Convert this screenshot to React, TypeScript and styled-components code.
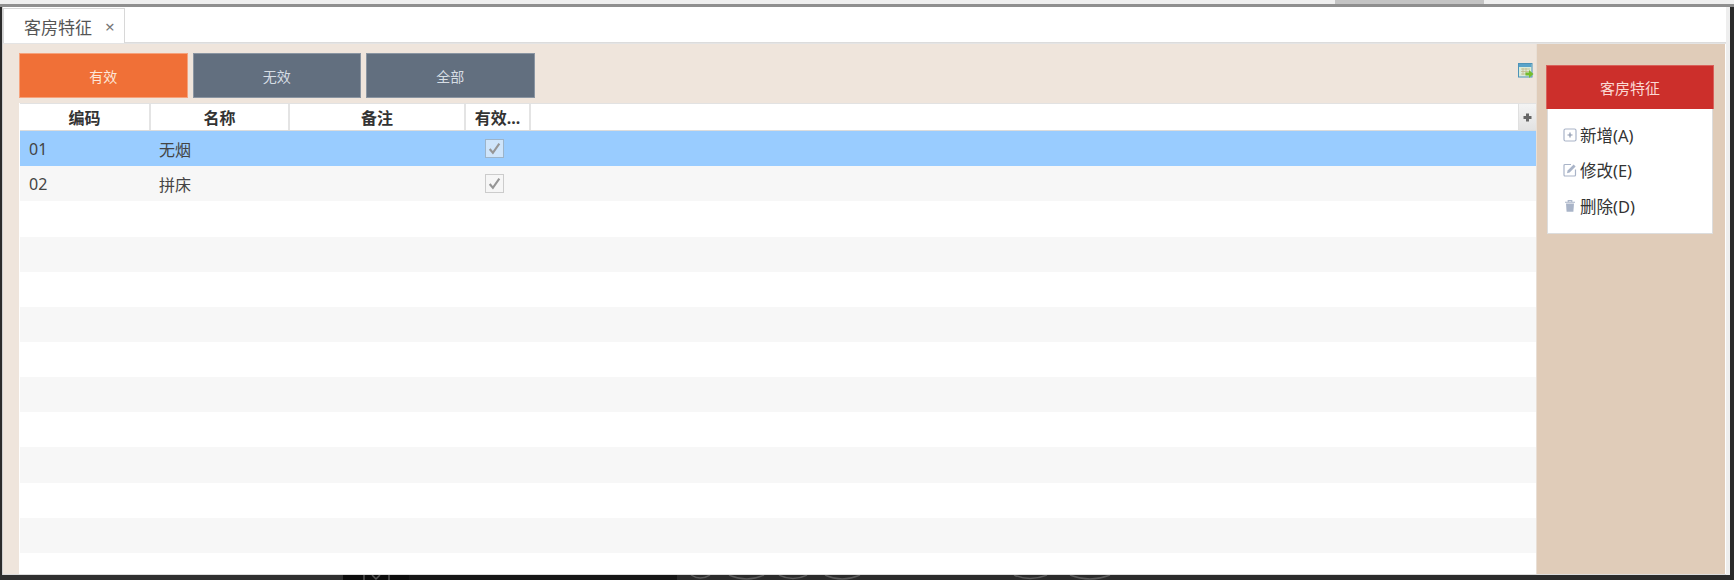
import * as React from 'react'
import styled, { createGlobalStyle } from 'styled-components'

const GlobalStyle = createGlobalStyle`
  html, body {
    margin: 0;
    padding: 0;
    height: 100%;
    background: #2b2b2b;
    overflow: hidden;
  }
`

const Page = styled.div`
  width: 1734px;
  height: 580px;
  display: flex;
  flex-direction: column;
  overflow: hidden;
  color: #333;
  font-family: 'Noto Sans', 'Noto Sans CJK SC', sans-serif;
`

const TopStrip = styled.div`
  height: 4px;
  display: flex;
  padding-left: 1335px;
  padding-right: 250px;
  background: #efefef;
  border-bottom: 3px solid #8f8f8f;
`

const TopBlock = styled.div`
  flex: 1;
  background: #c4c4c4;
`

const Frame = styled.div`
  flex: 1;
  min-height: 0;
  display: flex;
  flex-direction: column;
  margin: 0 4px 0 2px;
  border-left: 1px solid #d0d0d0;
  border-right: 4px solid #eeeeee;
  background: #fff;
`

const TabBar = styled.div`
  height: 35px;
  display: flex;
  align-items: flex-end;
  border-bottom: 1px solid #dcdcdc;
`

const Tab = styled.div`
  width: 122px;
  height: 35px;
  box-sizing: border-box;
  margin-bottom: -1px;
  padding-left: 20px;
  display: flex;
  align-items: center;
  gap: 13px;
  background: #fff;
  border: 1px solid #d8d8d8;
  border-bottom: none;
  font-size: 17px;
  color: #555;
  white-space: nowrap;
`

const TabClose = styled.span`
  font-size: 17px;
  line-height: 1;
  color: #777;
`

const Body = styled.div`
  flex: 1;
  min-height: 0;
  display: flex;
  border-top: 1px solid #e4e4e4;
  border-bottom: 1px solid #dcdcdc;
`

const Main = styled.div`
  flex: 1;
  min-width: 0;
  display: flex;
  flex-direction: column;
  padding: 9px 0 0 16px;
  background: #efe5dc;
`

const Toolbar = styled.div`
  height: 45px;
  display: flex;
  gap: 5px;
  margin-bottom: 5px;
  position: relative;
`

const FilterButton = styled.div<{ $active?: boolean }>`
  width: 168.5px;
  box-sizing: border-box;
  display: flex;
  align-items: center;
  justify-content: center;
  font-size: 14px;
  color: ${(p) => (p.$active ? '#fde6d8' : '#d6dde4')};
  background: ${(p) => (p.$active ? '#f07037' : '#626f7f')};
  border: 1px solid ${(p) => (p.$active ? '#f5a27c' : '#8a95a2')};
`

const ExportIcon = styled.svg`
  position: absolute;
  right: 2px;
  top: 10px;
`

const Table = styled.div`
  flex: 1;
  min-height: 0;
  display: flex;
  flex-direction: column;
  overflow: hidden;
  background: #fff;
`

const HeaderRow = styled.div`
  height: 28.1px;
  flex: none;
  display: flex;
  margin-left: 1px;
  border-top: 1px solid #e2e2e2;
  border-bottom: 1px solid #dcdcdc;
  box-sizing: border-box;
`

const HeaderCell = styled.div<{ $width: number }>`
  width: ${(p) => p.$width}px;
  flex: none;
  box-sizing: border-box;
  display: flex;
  align-items: center;
  justify-content: center;
  border-right: 2px solid #e4e4e4;
  font-size: 16px;
  font-weight: 700;
  color: #333;
  white-space: nowrap;
`

const HeaderFill = styled.div`
  flex: 1;
`

const ColumnPicker = styled.div`
  width: 17px;
  display: flex;
  align-items: center;
  justify-content: center;
  background: linear-gradient(#f4f4f4, #e2e2e2);
  border-left: 1px solid #e0e0e0;
`

const Row = styled.div<{ $selected?: boolean; $striped?: boolean }>`
  height: 35.15px;
  flex: none;
  display: flex;
  align-items: center;
  margin-left: 1px;
  box-sizing: border-box;
  font-size: 16px;
  color: #444;
  background: ${(p) => (p.$selected ? '#99ccff' : p.$striped ? '#f7f7f7' : '#fff')};
`

const Cell = styled.div<{ $width: number; $check?: boolean }>`
  width: ${(p) => p.$width}px;
  flex: none;
  box-sizing: border-box;
  display: flex;
  align-items: center;
  justify-content: ${(p) => (p.$check ? 'center' : 'flex-start')};
  padding: ${(p) => (p.$check ? '0 6px 0 0' : '0 0 0 9px')};
`

const Check = styled.div<{ $selected?: boolean }>`
  width: 19px;
  height: 19px;
  box-sizing: border-box;
  display: flex;
  align-items: center;
  justify-content: center;
  background: ${(p) => (p.$selected ? '#cfe5fb' : '#f6f6f6')};
  border: 1px solid ${(p) => (p.$selected ? '#9db4c9' : '#cccccc')};
`

const Side = styled.div`
  width: 189px;
  flex: none;
  box-sizing: border-box;
  margin-right: 1px;
  padding: 21px 11px 0 9px;
  background: #e0ccb9;
  border-left: 1px solid #e9dfd5;
`

const SideTitle = styled.div`
  height: 44px;
  display: flex;
  align-items: center;
  justify-content: center;
  font-size: 15px;
  color: #fbd9d4;
  background: #cc2f2b;
  border: 1px solid #d9605a;
  border-bottom: none;
  box-sizing: border-box;
`

const Menu = styled.div`
  height: 125px;
  box-sizing: border-box;
  margin: 0 1px;
  padding: 8px 0 0 15px;
  background: #fff;
  border: 1px solid #ddd;
  border-top: none;
`

const MenuItem = styled.div`
  height: 35.5px;
  display: flex;
  align-items: center;
  gap: 3px;
  font-size: 16.5px;
  color: #333;
`

const BottomStrip = styled.div`
  height: 5px;
  flex: none;
  display: flex;
  overflow: hidden;
`

const Shade = styled.div<{ $width?: number; $color: string }>`
  flex: ${(p) => (p.$width ? `0 0 ${p.$width}px` : 1)};
  background: ${(p) => p.$color};
`

const columns = [
  { title: '编码', width: 131 },
  { title: '名称', width: 139 },
  { title: '备注', width: 176 },
  { title: '有效...', width: 65 },
]

const rows = [
  { code: '01', name: '无烟', valid: true },
  { code: '02', name: '拼床', valid: true },
  ...Array.from({ length: 11 }, () => ({ code: '', name: '', valid: false })),
]

const CheckMark = () => (
  <svg width="15" height="15" viewBox="0 0 14 14" fill="none">
    <path d="M2.5 7.5 L5.5 11 L11.5 2.5" stroke="#969696" strokeWidth="2" />
  </svg>
)

const AddIcon = () => (
  <svg width="14" height="14" viewBox="0 0 14 14" fill="none">
    <rect x="1" y="1" width="12" height="12" rx="1.5" stroke="#a9b4c8" strokeWidth="1.2" />
    <path d="M4.5 7 H9.5 M7 4.5 V9.5" stroke="#8a96ad" strokeWidth="1.2" />
  </svg>
)

const EditIcon = () => (
  <svg width="14" height="14" viewBox="0 0 14 14" fill="none">
    <path d="M12.5 6.5 V12 a1 1 0 0 1 -1 1 H2 a1 1 0 0 1 -1 -1 V2.5 a1 1 0 0 1 1 -1 H8" stroke="#a9b4c8" strokeWidth="1.2" />
    <path d="M4 10.2 L4.6 7.6 L10.6 1.6 L12.6 3.6 L6.6 9.6 Z" fill="#a9b4c8" />
  </svg>
)

const TrashIcon = () => (
  <svg width="14" height="14" viewBox="0 0 14 14" fill="none">
    <path d="M2 3.2 H12 M5.2 3 V1.6 H8.8 V3" stroke="#a9b4c8" strokeWidth="1.1" />
    <path d="M3 4.6 H11 L10.4 12.8 H3.6 Z" fill="#a9b4c8" />
  </svg>
)

const App: React.FC = () => {
  return (
    <Page>
      <GlobalStyle />
      <TopStrip>
        <TopBlock />
      </TopStrip>
      <Frame>
        <TabBar>
          <Tab>
            客房特征
            <TabClose>×</TabClose>
          </Tab>
        </TabBar>
        <Body>
          <Main>
            <Toolbar>
              <FilterButton $active>有效</FilterButton>
              <FilterButton>无效</FilterButton>
              <FilterButton>全部</FilterButton>
              <ExportIcon width="16" height="16" viewBox="0 0 16 16" fill="none">
                <rect x="0.5" y="0.5" width="13.5" height="13.5" fill="#dcebd8" stroke="#4d93b8" />
                <rect x="1" y="1" width="12.5" height="3" fill="#5aa3c9" />
                <path d="M3 6 H12 M3 8.5 H12 M3 11 H8 M5 5 V12 M8 5 V12" stroke="#c3b98a" strokeWidth="0.8" />
                <path d="M7.5 9.5 H11 V7 L15.5 11 L11 15 V12.5 H7.5 Z" fill="#74bd2e" />
              </ExportIcon>
            </Toolbar>
            <Table>
              <HeaderRow>
                {columns.map((c) => (
                  <HeaderCell key={c.title} $width={c.width}>
                    {c.title}
                  </HeaderCell>
                ))}
                <HeaderFill />
                <ColumnPicker>
                  <svg width="9" height="9" viewBox="0 0 9 9">
                    <path d="M3 0.5 H6 V3 H8.5 V6 H6 V8.5 H3 V6 H0.5 V3 H3 Z" fill="#666" />
                  </svg>
                </ColumnPicker>
              </HeaderRow>
              {rows.map((r, i) => (
                <Row key={i} $selected={i === 0} $striped={i % 2 === 1}>
                  <Cell $width={130}>{r.code}</Cell>
                  <Cell $width={139}>{r.name}</Cell>
                  <Cell $width={176} />
                  <Cell $width={65} $check>
                    {r.valid && (
                      <Check $selected={i === 0}>
                        <CheckMark />
                      </Check>
                    )}
                  </Cell>
                </Row>
              ))}
            </Table>
          </Main>
          <Side>
            <SideTitle>客房特征</SideTitle>
            <Menu>
              <MenuItem>
                <AddIcon />
                新增(A)
              </MenuItem>
              <MenuItem>
                <EditIcon />
                修改(E)
              </MenuItem>
              <MenuItem>
                <TrashIcon />
                删除(D)
              </MenuItem>
            </Menu>
          </Side>
        </Body>
      </Frame>
      <BottomStrip>
        <Shade $width={343} $color="#303030" />
        <svg width="66" height="5" viewBox="0 0 66 5">
          <rect width="66" height="5" fill="#0c0c0c" />
          <path d="M21 0 V5 M29 0 L33 4 L37 0 M46 0 V5" stroke="#555" strokeWidth="1.5" fill="none" />
        </svg>
        <Shade $width={268} $color="#161616" />
        <svg width="1057" height="5" viewBox="0 0 1057 5">
          <rect width="1057" height="5" fill="#2b2b2b" />
          <path
            d="M14 0 Q23 6 33 0 M52 0 Q70 8 87 0 M102 0 Q116 7 130 0 M148 0 Q165 8 183 0 M337 0 Q353 7 370 0 M393 0 Q413 8 433 0"
            stroke="#5a5a5a"
            strokeWidth="1.5"
            fill="none"
          />
        </svg>
      </BottomStrip>
    </Page>
  )
}

export default App
